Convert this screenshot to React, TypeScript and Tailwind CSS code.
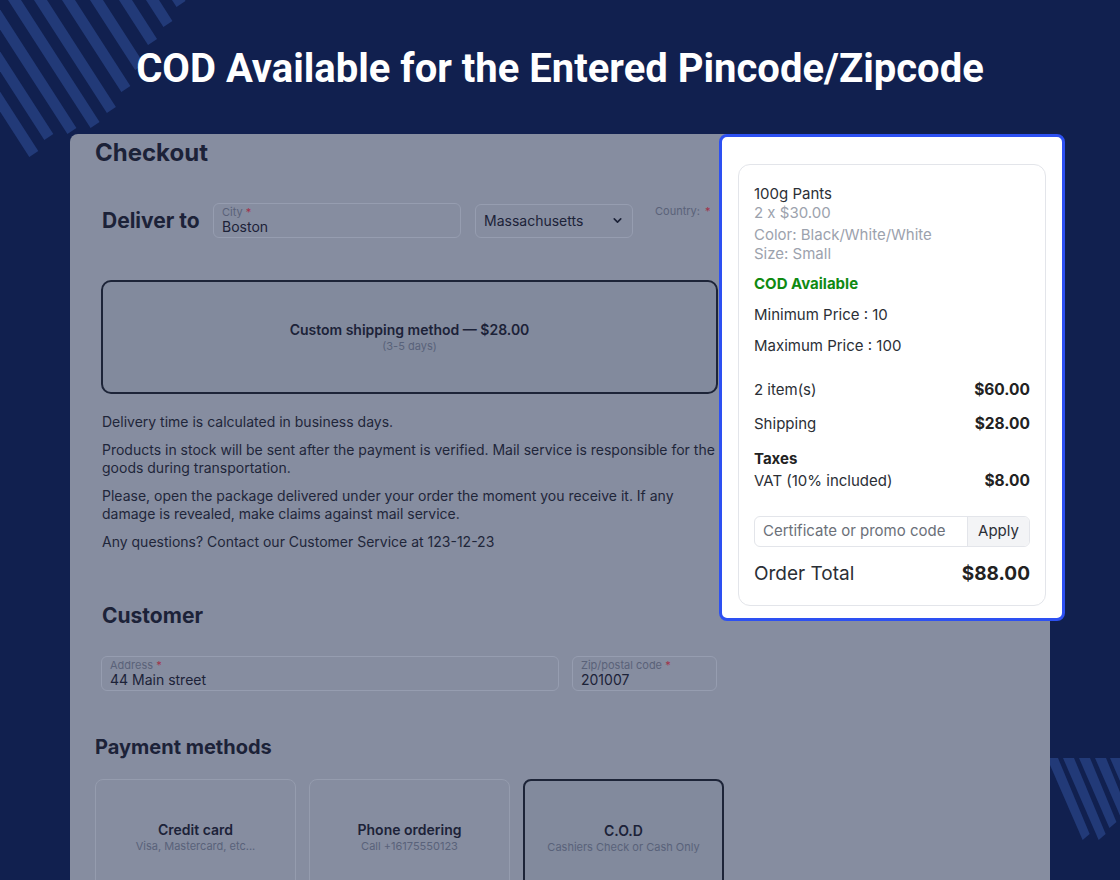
import React from 'react';
import { ChevronDown } from 'lucide-react';

// stripes: [left x at the top edge, tip y]
const topStripes: [number, number][] = [
  [172, 7],
  [146, 27],
  [119, 45],
  [90, 70],
  [62, 92],
  [34, 113],
  [8, 128],
  [-19, 134],
  [-46, 140],
  [-72, 157],
];

const bottomStripes: [number, number][] = [
  [-3, 82],
  [13, 82],
  [29, 70],
  [45, 60],
  [60, 60],
];

const Stripes: React.FC<{ items: [number, number][]; slope: number; w: number; className: string; width: number; height: number }> = ({
  items,
  slope,
  w,
  className,
  width,
  height,
}) => (
  <svg className={className} width={width} height={height} viewBox={`0 0 ${width} ${height}`}>
    {items.map(([x0, yEnd], i) => {
      const dx = yEnd / slope;
      const pts = `${x0},0 ${x0 + w},0 ${x0 + w + dx - 4},${yEnd - 6} ${x0 + dx},${yEnd}`;
      return <polygon key={i} points={pts} fill="#223a78" />;
    })}
  </svg>
);

const Field: React.FC<{ label: string; value: string; className?: string }> = ({ label, value, className }) => (
  <div className={`h-[35px] rounded-md border border-[#969db0] px-2 pt-[2px] ${className ?? ''}`}>
    <div className="text-[11px] leading-[12px] text-[#5a6279]">
      {label} <span className="text-[#a1324a]">*</span>
    </div>
    <div className="text-[14px] leading-[18px] text-[#1c2238]">{value}</div>
  </div>
);

const PayCard: React.FC<{ title: string; sub: string; active?: boolean }> = ({ title, sub, active }) => (
  <div
    className={`flex h-[120px] w-[201px] shrink-0 flex-col items-center rounded-lg pt-[41px] ${
      active ? 'border-2 border-[#1d2438] bg-[#828a9d]' : 'border border-[#959cae]'
    }`}
  >
    <div className="text-[14px] font-semibold leading-[18px] text-[#1c2238]">{title}</div>
    <div className="text-[11px] leading-[14px] text-[#59627a]">{sub}</div>
  </div>
);

export default function App() {
  return (
    <div className="relative h-[880px] w-[1120px] overflow-hidden bg-[#11204f] font-['Inter','Noto_Sans',sans-serif]">
      <Stripes items={topStripes} slope={1.55} w={13} width={200} height={170} className="absolute left-0 top-0" />
      <Stripes
        items={bottomStripes}
        slope={2.3}
        w={11}
        width={70}
        height={100}
        className="absolute left-[1050px] top-[758px]"
      />

      <div className="relative flex h-[134px] items-center justify-center pt-[4px]">
        <h1 className="font-['Roboto','Liberation_Sans',sans-serif] text-[40px] font-bold leading-[48px] text-white">
          COD Available for the Entered Pincode/Zipcode
        </h1>
      </div>

      <div className="relative ml-[70px] flex h-[746px] w-[980px] rounded-tl-lg bg-[#868da0]">
        {/* Checkout form, dimmed */}
        <div className="w-[649px] shrink-0 pl-[25px] pt-[3px] text-[#1c2238]">
          <h2 className="text-[24px] font-bold leading-[32px] text-[#1c2238]">Checkout</h2>

          <div className="ml-[7px] mt-[34px] flex items-center">
            <div className="w-[111px] text-[21px] font-bold leading-[28px]">Deliver to</div>
            <Field label="City" value="Boston" className="h-[34px] w-[248px] pt-[1px]" />
            <div className="ml-[14px] flex h-[34px] w-[158px] items-center justify-between rounded-md border border-[#969db0] pl-2 pr-2">
              <span className="text-[14px] text-[#1c2238]">Massachusetts</span>
              <ChevronDown size={13} strokeWidth={3} className="text-[#1c2238]" />
            </div>
            <div className="ml-[22px] self-start text-[11px] text-[#5a6279]">
              Country: <span className="ml-[2px] text-[#a1324a]">*</span>
            </div>
          </div>

          <div className="ml-[6px] mt-[42px] flex h-[114px] w-[617px] flex-col items-center justify-center rounded-[10px] border-2 border-[#1d2438] bg-[#828a9d]">
            <div className="text-[14px] font-semibold leading-[18px]">Custom shipping method — $28.00</div>
            <div className="text-[11px] leading-[15px] text-[#59627a]">(3-5 days)</div>
          </div>

          <div className="ml-[7px] mt-[19px] w-[620px] text-[14px] leading-[18px] text-[#1f263a]">
            <p className="mb-[10px]">Delivery time is calculated in business days.</p>
            <p className="mb-[10px]">
              Products in stock will be sent after the payment is verified. Mail service is responsible for the goods
              during transportation.
            </p>
            <p className="mb-[10px]">
              Please, open the package delivered under your order the moment you receive it. If any damage is revealed,
              make claims against mail service.
            </p>
            <p>Any questions? Contact our Customer Service at 123-12-23</p>
          </div>

          <h3 className="ml-[7px] mt-[51px] text-[21px] font-bold leading-[28px]">Customer</h3>

          <div className="ml-[6px] mt-[26px] flex gap-[13px]">
            <Field label="Address" value="44 Main street" className="w-[458px]" />
            <Field label="Zip/postal code" value="201007" className="w-[145px]" />
          </div>

          <h3 className="mt-[42px] text-[20px] font-bold leading-[28px]">Payment methods</h3>

          <div className="mt-[18px] flex gap-[13px]">
            <PayCard title="Credit card" sub="Visa, Mastercard, etc..." />
            <PayCard title="Phone ordering" sub="Call +16175550123" />
            <PayCard title="C.O.D" sub="Cashiers Check or Cash Only" active />
          </div>
        </div>

        {/* Highlighted cart summary */}
        <div className="relative z-10 -mr-[15px] h-[487px] w-[346px] shrink-0 rounded-lg border-[3px] border-[#2d50f2] bg-white px-[16px] pt-[27px]">
          <div className="h-[442px] rounded-xl border border-[#e3e5ea] px-[15px] pt-[19px] text-[15px] text-[#2b2f36]">
            <div className="leading-[19px]">100g Pants</div>
            <div className="leading-[19px] text-[#9ca2ad]">2 x $30.00</div>
            <div className="mt-[3px] leading-[19px] text-[#9ca2ad]">Color: Black/White/White</div>
            <div className="leading-[19px] text-[#9ca2ad]">Size: Small</div>

            <div className="mt-[11px] font-bold leading-[19px] text-[#0f8a12]">COD Available</div>
            <div className="mt-[12px] leading-[19px]">Minimum Price : 10</div>
            <div className="mt-[12px] leading-[19px]">Maximum Price : 100</div>

            <div className="mt-[25px] flex items-center justify-between leading-[20px]">
              <span>2 item(s)</span>
              <span className="text-[15.5px] font-bold text-[#222]">$60.00</span>
            </div>
            <div className="mt-[14px] flex items-center justify-between leading-[20px]">
              <span>Shipping</span>
              <span className="text-[15.5px] font-bold text-[#222]">$28.00</span>
            </div>
            <div className="mt-[15px] font-bold leading-[20px] text-[#222]">Taxes</div>
            <div className="mt-[2px] flex items-center justify-between leading-[20px]">
              <span>VAT (10% included)</span>
              <span className="text-[15.5px] font-bold text-[#222]">$8.00</span>
            </div>

            <div className="mt-[25px] flex h-[31px] overflow-hidden rounded-md border border-[#e3e5ea]">
              <div className="flex flex-1 items-center pl-[8px] text-[#6b7079]">Certificate or promo code</div>
              <div className="flex w-[62px] items-center justify-center border-l border-[#e3e5ea] bg-[#f3f4f6] text-[#2b2f36]">
                Apply
              </div>
            </div>

            <div className="mt-[15px] flex items-center justify-between leading-[24px]">
              <span className="text-[19px] text-[#2b2f36]">Order Total</span>
              <span className="text-[19px] font-bold text-[#222]">$88.00</span>
            </div>
          </div>
        </div>
      </div>
    </div>
  );
}
